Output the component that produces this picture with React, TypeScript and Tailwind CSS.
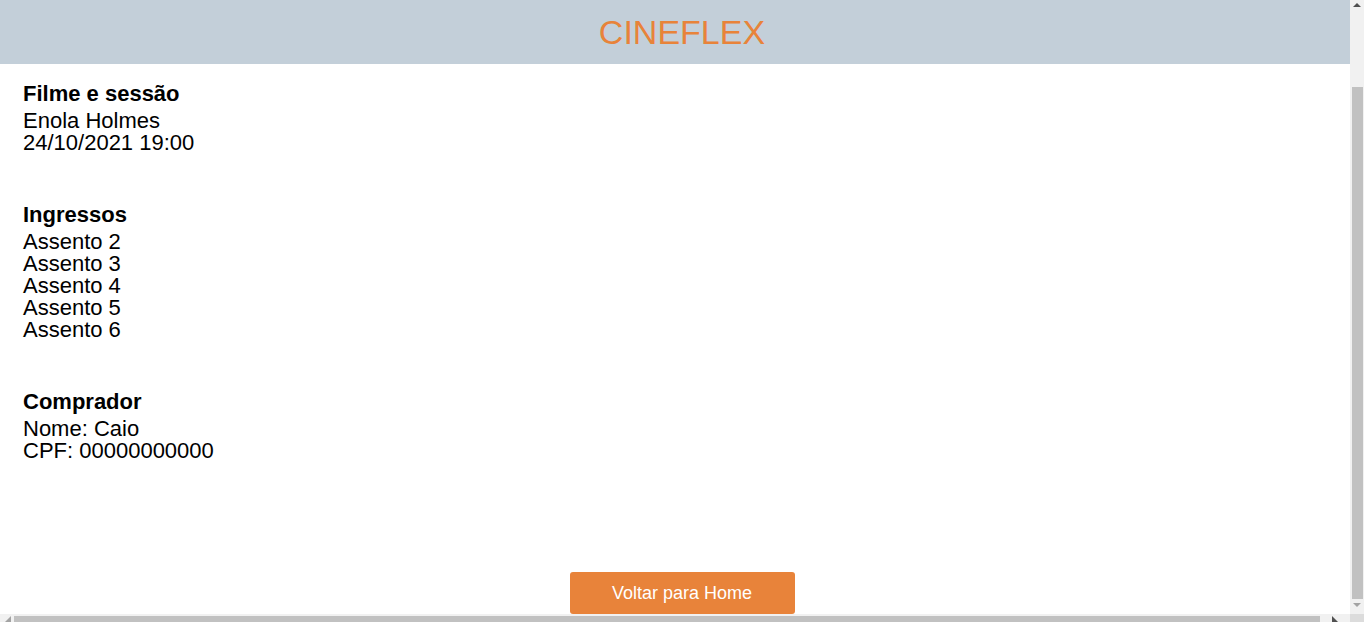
import React from "react";

const Section = ({ title, lines }: { title: string; lines: string[] }) => (
  <section className="flex flex-col">
    <h2 className="text-[22px] leading-[22px] font-bold text-black">{title}</h2>
    <div className="mt-[5px] flex flex-col">
      {lines.map((l) => (
        <p key={l} className="text-[22px] leading-[22px] text-black">
          {l}
        </p>
      ))}
    </div>
  </section>
);

const Tri = ({ dir, color }: { dir: "up" | "down"; color: string }) => {
  const pts = dir === "up" ? "0,4 4,0 8,4" : "0,0 8,0 4,4";
  return (
    <svg width={8} height={4} viewBox="0 0 8 4">
      <polygon points={pts} fill={color} />
    </svg>
  );
};

export default function App() {
  return (
    <div
      className="relative flex h-screen w-full flex-col overflow-hidden bg-white"
      style={{ fontFamily: '"Liberation Sans", Arial, sans-serif' }}
    >
      <header className="flex h-16 w-full shrink-0 items-center justify-center bg-[#C3CFD9]">
        <h1 className="text-[34px] leading-none font-normal text-[#E8833A]">CINEFLEX</h1>
      </header>
      <main className="flex flex-col gap-[50px] pt-[19px] pl-[23px]">
        <Section title="Filme e sessão" lines={["Enola Holmes", "24/10/2021 19:00"]} />
        <Section
          title="Ingressos"
          lines={["Assento 2", "Assento 3", "Assento 4", "Assento 5", "Assento 6"]}
        />
        <Section title="Comprador" lines={["Nome: Caio", "CPF: 00000000000"]} />
      </main>
      <div className="flex w-full justify-center pt-[110px]">
        <button className="h-[42px] w-[225px] rounded-[3px] bg-[#E8833A] text-[18px] text-white">
          Voltar para Home
        </button>
      </div>

      {/* vertical scrollbar overlay */}
      <div className="absolute top-0 right-0 bottom-[8px] flex w-[14px] flex-col items-center bg-[#F1F1F1]">
        <div className="flex h-[14px] w-full items-start justify-center pt-[3px]">
          <Tri dir="up" color="#505050" />
        </div>
        <div className="mt-[73px] mr-[1px] h-[512px] w-[11px] self-end bg-[#C1C1C1]" />
        <div className="flex w-full justify-center pt-[4px]">
          <Tri dir="down" color="#A3A3A3" />
        </div>
      </div>
      {/* horizontal scrollbar overlay */}
      <div className="absolute right-0 bottom-0 left-0 flex h-[8px] items-end bg-[#F1F1F1]">
        <div className="flex h-[8px] w-[14px] items-end justify-center pl-[2px]">
          <svg width="6" height="6" viewBox="0 0 6 6">
            <polygon points="6,0 6,6 0,6" fill="#A3A3A3" />
          </svg>
        </div>
        <div className="h-[6px] w-[1306px] bg-[#C1C1C1]" />
        <div className="flex h-[8px] w-[30px] items-end justify-center">
          <svg width="6" height="6" viewBox="0 0 6 6">
            <polygon points="0,0 6,6 0,6" fill="#505050" />
          </svg>
        </div>
        <div className="ml-auto h-[8px] w-[14px] bg-[#DCDCDC]" />
      </div>
    </div>
  );
}
